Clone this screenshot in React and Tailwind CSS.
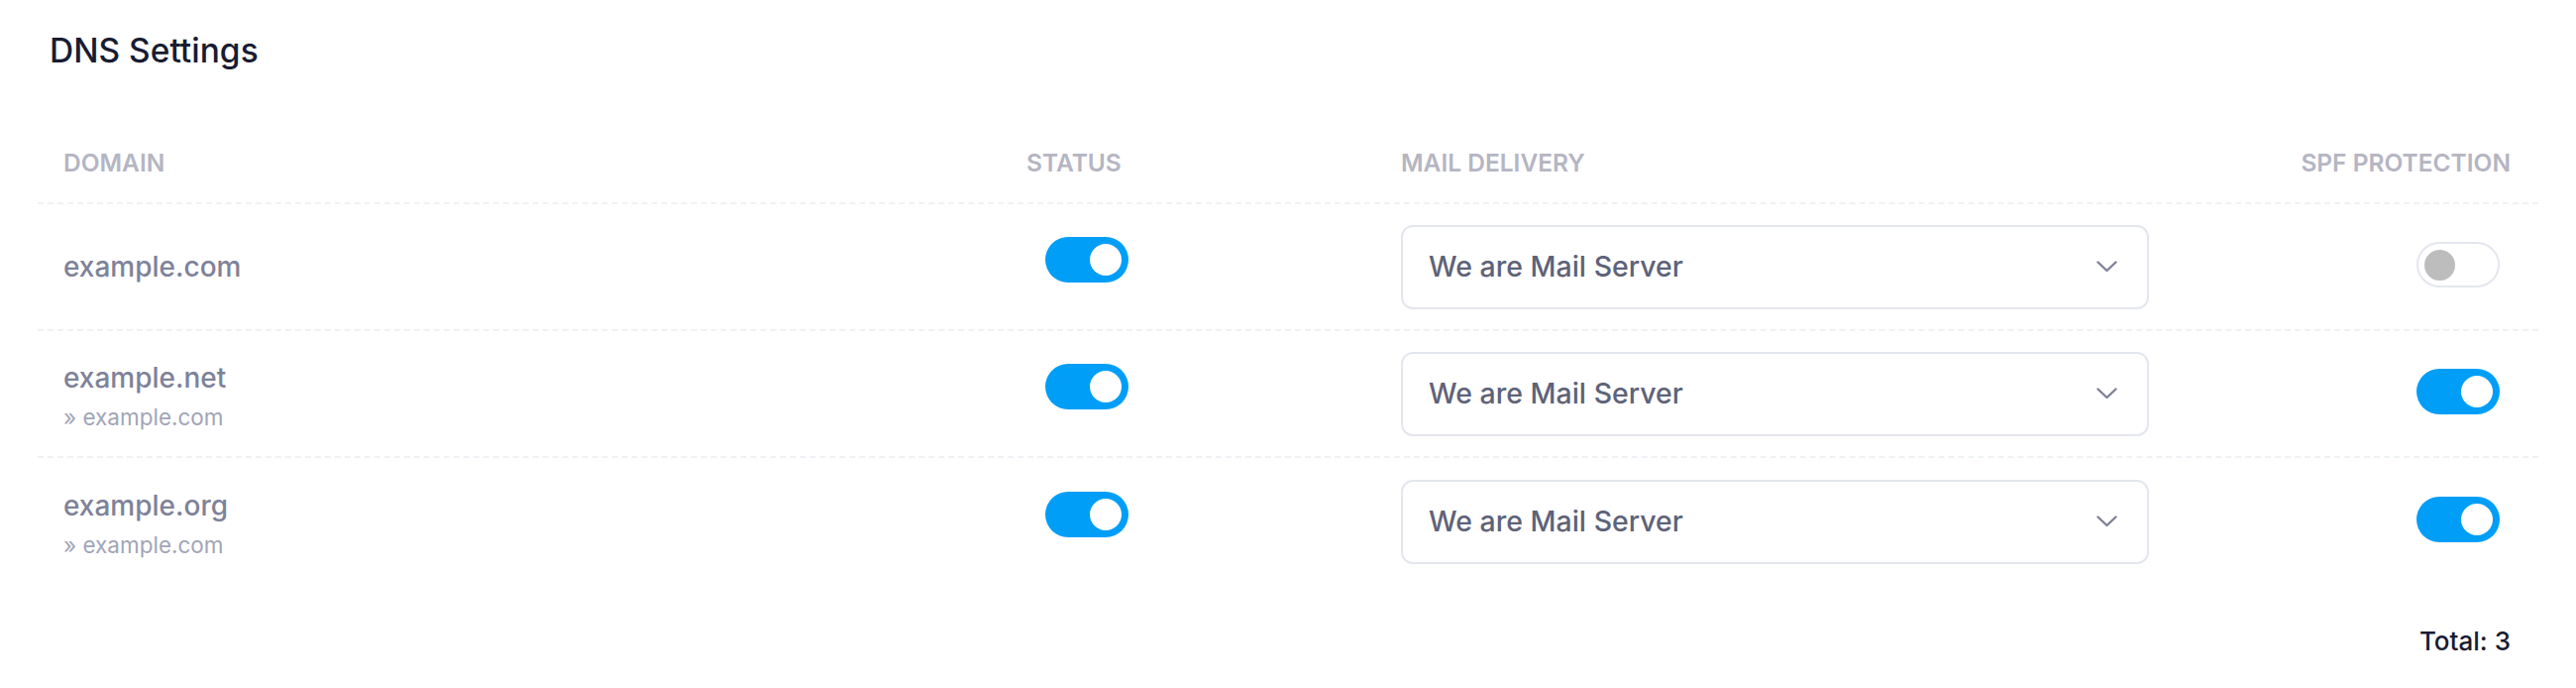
import React, { useState } from "react";

const domains = [
  { name: "example.com", parent: null, status: true, spf: false },
  { name: "example.net", parent: "example.com", status: true, spf: true },
  { name: "example.org", parent: "example.com", status: true, spf: true },
];

const Toggle = ({ on, onClick }) => (
  <button
    type="button"
    onClick={onClick}
    className={`relative flex h-[46px] w-[84px] shrink-0 items-center rounded-full ${
      on ? "justify-end bg-[#009ef7] px-[7px]" : "justify-start border-2 border-[#e4e6ef] bg-white px-[6px]"
    }`}
  >
    <span
      className={`block rounded-full ${
        on ? "h-[32px] w-[32px] bg-white" : "h-[31px] w-[31px] bg-[#bdbdbd]"
      }`}
    />
  </button>
);

const Chevron = () => (
  <svg width="21" height="12" viewBox="0 0 21 12" fill="none">
    <polyline
      points="1.5,1.5 10.5,10 19.5,1.5"
      stroke="#7e8299"
      strokeWidth="2.4"
      strokeLinecap="round"
      strokeLinejoin="round"
    />
  </svg>
);

const App = () => {
  const [rows, setRows] = useState(domains);

  const flip = (i, key) => {
    setRows(rows.map((r, idx) => (idx === i ? { ...r, [key]: !r[key] } : r)));
  };

  return (
    <div className="min-h-[694px] w-[2600px] bg-white font-['Inter',sans-serif]">
      <div className="pl-[50px] pt-[32px]">
        <h3 className="text-[33.5px] font-medium leading-[38px] text-[#181c32]">DNS Settings</h3>
      </div>

      <div className="ml-[38px] mt-[76px] w-[2524px]">
        {/* header */}
        <div className="grid grid-cols-[972px_380px_800px_372px] border-b-2 border-dashed border-[#eff2f5] pb-[21px] text-[24.5px] font-semibold uppercase leading-[37px] text-[#b5b5c3]">
          <div className="pl-[26px]">Domain</div>
          <div className="pl-[26px]">Status</div>
          <div className="pl-[24px]">Mail Delivery</div>
          <div className="pr-[28px] text-right">SPF Protection</div>
        </div>

        {rows.map((row, i) => (
          <div
            key={row.name}
            className={`grid h-[128px] grid-cols-[972px_380px_800px_372px] items-center ${
              i < rows.length - 1 ? "border-b-2 border-dashed border-[#eff2f5]" : ""
            }`}
          >
            <div className={`flex flex-col pl-[26px] ${row.parent ? "pt-[3px]" : ""}`}>
              <span className="text-[28px] font-medium leading-[34px] text-[#7e8299]">{row.name}</span>
              {row.parent && (
                <span className="mt-[10px] text-[22.5px] leading-[26px] text-[#a1a5b7]">» {row.parent}</span>
              )}
            </div>
            <div className="mb-[14px] flex pl-[45px]">
              <Toggle on={row.status} onClick={() => flip(i, "status")} />
            </div>
            <div className="pl-[24px]">
              <div className="flex h-[85px] w-[755px] items-center justify-between rounded-[12px] border-2 border-[#e4e6ef] bg-white pl-[26px] pr-[30px]">
                <span className="text-[28.5px] font-medium text-[#5e6278]">We are Mail Server</span>
                <Chevron />
              </div>
            </div>
            <div className="mb-[4px] flex justify-end pr-[39px]">
              <Toggle on={row.spf} onClick={() => flip(i, "spf")} />
            </div>
          </div>
        ))}

        <div className="mt-[37px] pr-[28px] text-right text-[26px] font-medium leading-[39px] text-[#181c32]">
          Total: {rows.length}
        </div>
      </div>
    </div>
  );
};

export default App;
